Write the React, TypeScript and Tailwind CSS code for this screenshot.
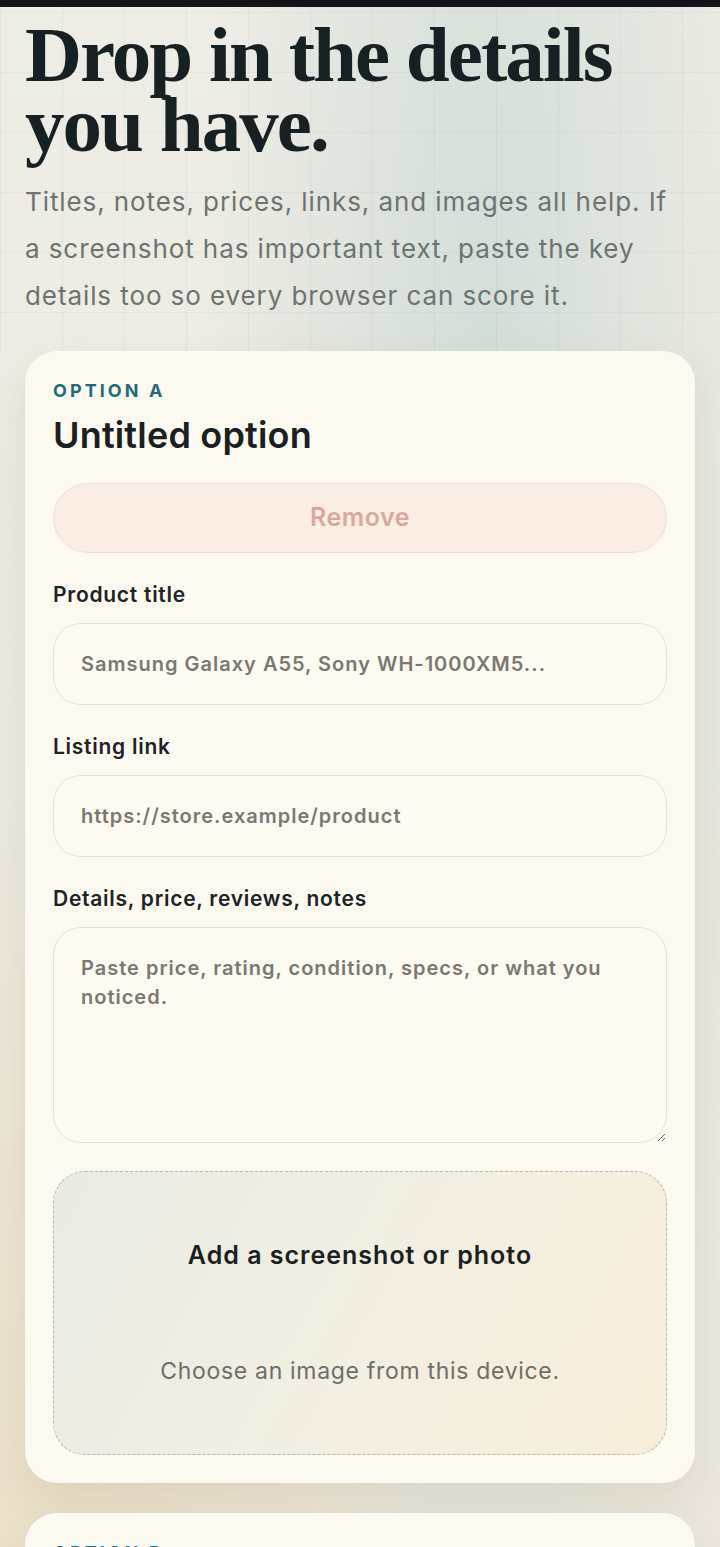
import { useState } from 'react'

// Option entry form — header copy, then one card per option with fields and an image drop zone.

const sans = "font-['Inter','Liberation_Sans',sans-serif]"

function Field({ label, placeholder }: { label: string; placeholder: string }) {
  return (
    <label className="flex flex-col gap-[14px]">
      <span className="text-[21px] leading-[28px] font-semibold tracking-[0.035em] text-[#1d2326]">{label}</span>
      <input
        placeholder={placeholder}
        className="h-[82px] w-full rounded-[28px] border border-[#e9e3d6] bg-[#fdfaf2] px-[27px] text-[20px] font-semibold tracking-[0.05em] text-[#1d2326] outline-none placeholder:text-[#7b7872]"
      />
    </label>
  )
}

function OptionCard({ letter }: { letter: string }) {
  const [notes, setNotes] = useState('')
  return (
    <section className="rounded-[32px] bg-[#fcf9f1] px-[28px] pt-[28px] pb-[28px] shadow-[0_18px_40px_rgba(120,100,60,0.12)]">
      <p className="text-[18px] leading-[24px] font-bold tracking-[0.17em] text-[#1f6b7b]">OPTION {letter}</p>
      <h2 className="mt-[11px] text-[36px] leading-[42px] font-semibold tracking-[0.005em] text-[#1a2022]">
        Untitled option
      </h2>

      <button className="mt-[27px] h-[70px] w-full rounded-full border border-[#f1ddd4] bg-[#f9ede4] text-[25px] font-semibold tracking-[0.02em] text-[#dba69e]">
        Remove
      </button>

      <div className="mt-[28px] flex flex-col gap-[28px]">
        <Field label="Product title" placeholder="Samsung Galaxy A55, Sony WH-1000XM5..." />
        <Field label="Listing link" placeholder="https://store.example/product" />
        <label className="flex flex-col gap-[14px]">
          <span className="text-[21px] leading-[28px] font-semibold tracking-[0.035em] text-[#1d2326]">
            Details, price, reviews, notes
          </span>
          <textarea
            value={notes}
            onChange={(e) => setNotes(e.target.value)}
            placeholder="Paste price, rating, condition, specs, or what you noticed."
            className="h-[216px] w-full rounded-[28px] border border-[#e6e0d3] bg-[#fdfaf2] px-[27px] pt-[26px] text-[20px] leading-[29px] font-semibold tracking-[0.05em] text-[#1d2326] outline-none placeholder:text-[#7b7872]"
          />
        </label>

        <div className="flex h-[284px] flex-col items-center justify-center gap-[86px] rounded-[32px] border border-dashed border-[#b9b6ad] bg-[linear-gradient(120deg,#e9ebe4_0%,#f1eee2_45%,#f7eeda_100%)] text-center">
          <p className="text-[25px] leading-[30px] font-semibold tracking-[0.04em] text-[#1a2022]">Add a screenshot or photo</p>
          <p className="text-[23px] leading-[30px] tracking-[0.03em] text-[#6f6d68]">Choose an image from this device.</p>
        </div>
      </div>
    </section>
  )
}

export default function App() {
  return (
    <div
      className={`${sans} min-h-screen overflow-hidden bg-[radial-gradient(ellipse_at_68%_16%,#d2ddd8_0%,rgba(210,221,216,0)_42%),radial-gradient(ellipse_at_0%_78%,#ecdcbd_0%,rgba(236,220,189,0)_45%),linear-gradient(180deg,#eeede5_0%,#ebe7dc_60%,#e7e2d6_100%)]`}
    >
      <div className="h-[7px] bg-[#121417]" />

      <header className="bg-[linear-gradient(to_right,rgba(70,80,70,0.05)_1px,transparent_1px),linear-gradient(to_bottom,rgba(70,80,70,0.05)_1px,transparent_1px)] bg-[size:62px_60px] bg-[position:0_5px] px-[25px] pt-[13px] pb-[32px]">
        <h1 className="font-['Liberation_Serif','DejaVu_Serif',serif] text-[79px] leading-[70px] font-bold tracking-[-0.025em] text-[#172023]">
          Drop in the details you have.
        </h1>
        <p className="mt-[18px] max-w-[650px] text-[26px] leading-[47px] tracking-[0.035em] text-[#6c7370]">
          Titles, notes, prices, links, and images all help. If a screenshot has important text, paste the key details
          too so every browser can score it.
        </p>
      </header>

      <main className="flex flex-col gap-[30px] px-[25px] pb-[40px]">
        <OptionCard letter="A" />
        <OptionCard letter="B" />
      </main>
    </div>
  )
}
